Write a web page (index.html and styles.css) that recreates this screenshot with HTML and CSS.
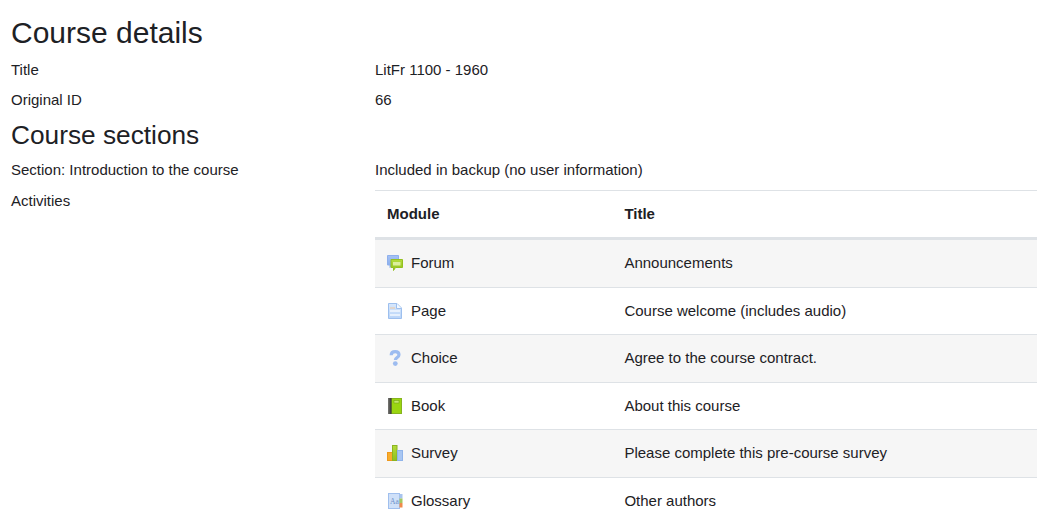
FILE: index.html
```html
<!DOCTYPE html>
<html lang="en">
<head>
<meta charset="utf-8">
<title>Course details</title>
<link rel="stylesheet" href="styles.css">
</head>
<body>
<svg class="defs" width="0" height="0" aria-hidden="true">
  <defs>
    <linearGradient id="g-blue" x1="0" y1="0" x2="0" y2="1"><stop offset="0" stop-color="#a6c2f5"/><stop offset="1" stop-color="#84aaea"/></linearGradient>
    <linearGradient id="g-green" x1="0" y1="0" x2="0" y2="1"><stop offset="0" stop-color="#b4dc3c"/><stop offset="1" stop-color="#8fc01c"/></linearGradient>
    <linearGradient id="g-page" x1="0" y1="0" x2="0" y2="1"><stop offset="0" stop-color="#d8e8fc"/><stop offset="1" stop-color="#b9d4f8"/></linearGradient>
    <linearGradient id="g-book" x1="0" y1="0" x2="1" y2="0"><stop offset="0" stop-color="#7a7a76"/><stop offset="1" stop-color="#262624"/></linearGradient>
  </defs>
</svg>
<main class="page">
  <h2 class="title-main">Course details</h2>
  <div class="row"><div class="label">Title</div><div class="value">LitFr 1100 - 1960</div></div>
  <div class="row"><div class="label">Original ID</div><div class="value">66</div></div>
  <h3 class="title-sub">Course sections</h3>
  <div class="row"><div class="label">Section: Introduction to the course</div><div class="value">Included in backup (no user information)</div></div>
  <div class="row">
    <div class="label">Activities</div>
    <div class="value">
      <table class="modules">
        <thead><tr><th class="col-module">Module</th><th>Title</th></tr></thead>
        <tbody>
          <tr><td><span class="mod">
            <svg class="icon" viewBox="0 0 16 16"><path d="M.5 .5h11v9.500H5L3 12.500V10H.5z" fill="url(#g-blue)" stroke="#8fb0ec"/><path d="M4 4.500h11.500v8H8.500L6.500 15.500v-3H4z" fill="url(#g-green)" stroke="#94c020"/><rect x="6" y="7" width="7.500" height="3.500" fill="#dcef9c"/></svg>
            Forum</span></td><td>Announcements</td></tr>
          <tr><td><span class="mod">
            <svg class="icon" viewBox="0 0 16 16"><path d="M1.500 .5h8.500l4.500 4.500v10.500h-13z" fill="url(#g-page)" stroke="#9dbfee"/><path d="M9.500 .5v5h5" fill="#f4f9ff" stroke="#9dbfee"/><path d="M3 5h5" stroke="#f0c8a0"/><path d="M3 8h10M3 12h10" stroke="#f2f7fe" stroke-width="1.500"/></svg>
            Page</span></td><td>Course welcome (includes audio)</td></tr>
          <tr><td><span class="mod">
            <svg class="icon" viewBox="0 0 16 16"><path d="M4.200 5.200C4.200 2.800 6 1.600 8.200 1.600s3.800 1 3.800 3.100c0 2.800-3.600 2.800-3.600 5.300" fill="none" stroke="#9dbcf0" stroke-width="3.200"/><circle cx="8.300" cy="13.600" r="2.400" fill="#9dbcf0"/></svg>
            Choice</span></td><td>Agree to the course contract.</td></tr>
          <tr><td><span class="mod">
            <svg class="icon" viewBox="0 0 16 16"><rect x="1" y="0" width="4" height="16" fill="url(#g-book)"/><rect x="4.500" y="0" width="10.500" height="16" fill="#86b41e"/><rect x="5" y="1" width="9" height="14" fill="#9ad510"/><rect x="7" y="2.500" width="5" height="2.500" fill="#c5e86a" stroke="#6d9a10" stroke-width=".5"/></svg>
            Book</span></td><td>About this course</td></tr>
          <tr><td><span class="mod">
            <svg class="icon" viewBox="0 0 16 16"><rect x="0.500" y="7.500" width="5" height="8" fill="#f8ac2c" stroke="#ee981c"/><rect x="5.500" y="0.500" width="4.500" height="15" fill="url(#g-green)" stroke="#8cb420"/><rect x="10.500" y="5.500" width="5" height="10" fill="#a8c6f2" stroke="#90b4ea"/></svg>
            Survey</span></td><td>Please complete this pre-course survey</td></tr>
          <tr><td><span class="mod">
            <svg class="icon" viewBox="0 0 16 16"><rect x="1.500" y="0.500" width="11" height="15" fill="#cfe0f8" stroke="#a0bfee"/><rect x="12.500" y="1" width="3" height="4.500" fill="#a8c4ee"/><rect x="12.500" y="5.500" width="3" height="4.500" fill="#a4c860"/><rect x="12.500" y="10" width="3" height="4.500" fill="#ef8a4a"/><text x="3" y="10.500" class="icon-text">Aa</text></svg>
            Glossary</span></td><td>Other authors</td></tr>
        </tbody>
      </table>
    </div>
  </div>
</main>
</body>
</html>
```
FILE: styles.css
```css
html, body { margin: 0; padding: 0; background: #fff; }
body {
  font-family: "Liberation Sans", Arial, sans-serif;
  font-size: 15px;
  line-height: 22.5px;
  color: #1d2125;
  overflow: hidden;
  height: 531px;
}
.defs { display: block; height: 0; }
.page { padding: 15px 0 0 11px; }
.title-main { margin: 0 0 7.5px; font-size: 30px; line-height: 36px; font-weight: 400; }
.title-sub { margin: 0 0 8px; font-size: 26.25px; line-height: 31.5px; font-weight: 400; }
.row { display: flex; margin-bottom: 8px; }
.label { width: 364px; flex: none; }
.value { flex: 1; min-width: 0; }
.modules { width: 100%; border-collapse: separate; border-spacing: 0; }
.modules th, .modules td { padding: 12px; text-align: left; vertical-align: top; border-top: 1px solid #dee2e6; }
.modules th { font-weight: 700; border-bottom: 2px solid #dee2e6; }
.modules tbody tr:nth-child(odd) { background: #f6f6f6; }
.col-module { width: 213.4px; }
.mod { display: flex; align-items: center; gap: 8px; }
.icon { width: 16px; height: 16px; flex: none; }
.icon-text { font-family: "Liberation Serif", serif; font-size: 7.5px; fill: #6d8fc8; }
```
